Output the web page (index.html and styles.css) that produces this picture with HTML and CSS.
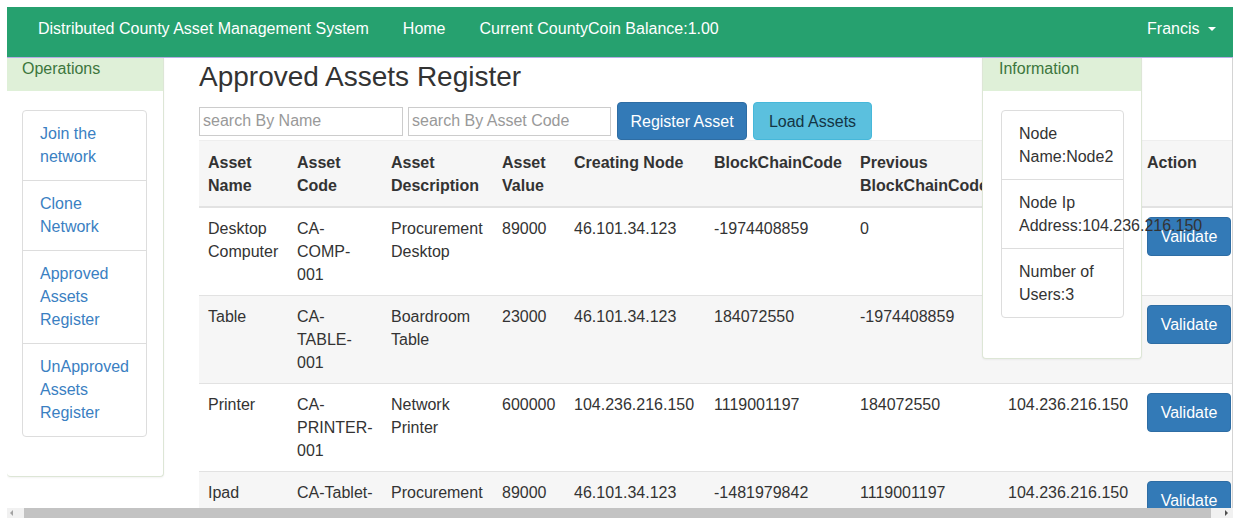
FILE: index.html
```html
<!DOCTYPE html>
<html lang="en">
<head>
<meta charset="utf-8">
<title>Approved Assets Register</title>
<link rel="stylesheet" href="styles.css">
</head>
<body>
<div class="frame">
  <nav class="navbar">
    <span class="brand">Distributed County Asset Management System</span>
    <a class="nav-link" href="#">Home</a>
    <span class="nav-link">Current CountyCoin Balance:1.00</span>
    <a class="nav-link nav-user" href="#">Francis <span class="caret"></span></a>
  </nav>

  <div class="page">
    <aside class="panel panel-side">
      <div class="panel-heading">Operations</div>
      <div class="panel-body">
        <div class="list-group">
          <a class="list-item link" href="#">Join the network</a>
          <a class="list-item link" href="#">Clone Network</a>
          <a class="list-item link" href="#">Approved Assets Register</a>
          <a class="list-item link" href="#">UnApproved Assets Register</a>
        </div>
      </div>
    </aside>

    <main class="main">
      <h2 class="page-title">Approved Assets Register</h2>
      <div class="toolbar">
        <input class="search search-name" type="text" placeholder="search By Name">
        <input class="search search-code" type="text" placeholder="search By Asset Code">
        <button class="btn btn-primary btn-register">Register Asset</button>
        <button class="btn btn-info">Load Assets</button>
      </div>

      <table class="assets">
        <colgroup>
          <col class="c-name"><col class="c-code"><col class="c-desc"><col class="c-value">
          <col class="c-node"><col class="c-chain"><col class="c-prev"><col class="c-approver"><col class="c-action">
        </colgroup>
        <thead>
          <tr>
            <th>Asset Name</th>
            <th>Asset Code</th>
            <th>Asset Description</th>
            <th>Asset Value</th>
            <th>Creating Node</th>
            <th>BlockChainCode</th>
            <th>Previous BlockChainCode</th>
            <th>Approving Node</th>
            <th>Action</th>
          </tr>
        </thead>
        <tbody>
          <tr>
            <td>Desktop Computer</td>
            <td>CA-COMP-001</td>
            <td>Procurement Desktop</td>
            <td>89000</td>
            <td>46.101.34.123</td>
            <td>-1974408859</td>
            <td>0</td>
            <td>104.236.216.150</td>
            <td><button class="btn btn-primary btn-validate">Validate</button></td>
          </tr>
          <tr>
            <td>Table</td>
            <td>CA-TABLE-001</td>
            <td>Boardroom Table</td>
            <td>23000</td>
            <td>46.101.34.123</td>
            <td>184072550</td>
            <td>-1974408859</td>
            <td>104.236.216.150</td>
            <td><button class="btn btn-primary btn-validate">Validate</button></td>
          </tr>
          <tr>
            <td>Printer</td>
            <td>CA-PRINTER-001</td>
            <td>Network Printer</td>
            <td>600000</td>
            <td>104.236.216.150</td>
            <td>1119001197</td>
            <td>184072550</td>
            <td>104.236.216.150</td>
            <td><button class="btn btn-primary btn-validate">Validate</button></td>
          </tr>
          <tr>
            <td>Ipad</td>
            <td>CA-Tablet-001</td>
            <td>Procurement Tablet</td>
            <td>89000</td>
            <td>46.101.34.123</td>
            <td>-1481979842</td>
            <td>1119001197</td>
            <td>104.236.216.150</td>
            <td><button class="btn btn-primary btn-validate">Validate</button></td>
          </tr>
        </tbody>
      </table>
    </main>

    <!-- node details card floats over the right side of the register table -->
    <section class="panel panel-info">
      <div class="panel-heading">Information</div>
      <div class="panel-body">
        <div class="list-group">
          <div class="list-item">Node Name:Node2</div>
          <div class="list-item">Node Ip Address:104.236.216.150</div>
          <div class="list-item">Number of Users:3</div>
        </div>
      </div>
    </section>
  </div>

  <div class="hscroll">
    <span class="arrow arrow-left"></span>
    <span class="thumb"></span>
    <span class="arrow arrow-right"></span>
  </div>
</div>
</body>
</html>
```

FILE: styles.css
```css
* {
  box-sizing: border-box;
}

html, body {
  margin: 0;
  padding: 0;
  background: #fff;
}

body {
  font-family: "Liberation Sans", Arial, Helvetica, sans-serif;
  font-size: 16px;
  line-height: 23px;
  color: #333;
}

.frame {
  height: 518px;
  width: 1236px;
  padding: 7px 3px 0 7px;
  display: flex;
  flex-direction: column;
  overflow: hidden;
}

/* top bar */
.navbar {
  flex: 0 0 50px;
  display: flex;
  align-items: center;
  padding-left: 14px;
  padding-bottom: 8px;
  background: #26a16f;
  box-shadow: 0 1px 0 #b7ace6;
  position: relative;
  z-index: 3;
  color: #fff;
}

.brand,
.nav-link {
  padding: 0 17px;
  color: #fff;
  text-decoration: none;
  white-space: nowrap;
}

.nav-user {
  margin-left: auto;
}

.caret {
  display: inline-block;
  width: 0;
  height: 0;
  margin-left: 4px;
  vertical-align: middle;
  border-top: 4px solid #fff;
  border-left: 4px solid transparent;
  border-right: 4px solid transparent;
}

/* content area */
.page {
  flex: 1 1 auto;
  position: relative;
  display: flex;
  align-items: flex-start;
  overflow: hidden;
  border-right: 1px solid #d4d4d4;
  min-height: 0;
}

.panel {
  background: #fff;
  border: 1px solid #dde6d6;
  border-top: 0;
  border-radius: 0 0 4px 4px;
  box-shadow: 0 1px 2px rgba(0, 0, 0, 0.05);
}

.panel-heading {
  height: 34px;
  padding: 0 16px;
  line-height: 23px;
  background: #dff0d8;
  color: #3c763d;
}

.panel-body {
  padding: 19px 17px 40px;
}

.panel-side {
  flex: 0 0 157px;
  width: 157px;
  border-left: 0;
}

.panel-side .panel-heading {
  padding-left: 15px;
}

.panel-side .panel-body {
  padding-left: 15px;
  padding-right: 16px;
  padding-bottom: 39px;
}

.list-group {
  border: 1px solid #ddd;
  border-radius: 4px;
}

.list-item {
  display: block;
  padding: 11px 16px 11px 17px;
  border-top: 1px solid #ddd;
  white-space: normal;
}

.list-item:first-child {
  border-top: 0;
}

.panel-side .list-item {
  padding-bottom: 12px;
}

.link {
  color: #3a80c2;
  text-decoration: none;
}

.main {
  flex: 1 1 auto;
  min-width: 0;
  margin-left: 35px;
}

.page-title {
  margin: 0;
  padding-top: 3px;
  font-size: 28px;
  line-height: 34px;
  font-weight: normal;
  color: #333;
}

.toolbar {
  display: flex;
  align-items: center;
  height: 38px;
  margin-top: 8px;
}

.search {
  height: 29px;
  padding: 0 3px;
  border: 1px solid #ccc;
  border-radius: 0;
  font-family: inherit;
  font-size: 16px;
  color: #555;
  background: #fff;
}

.search::placeholder {
  color: #999;
}

.search-name {
  width: 204px;
}

.search-code {
  width: 203px;
  margin-left: 5px;
}

.btn {
  display: inline-block;
  font-family: inherit;
  font-size: 16px;
  line-height: 23px;
  padding: 7px 12px 6px;
  border: 1px solid transparent;
  border-radius: 4px;
  white-space: nowrap;
  cursor: pointer;
}

.btn-primary {
  background: #337ab7;
  border-color: #2e6da4;
  color: #fff;
}

.btn-info {
  background: #5bc0de;
  border-color: #46b8da;
  color: #143544;
}

.btn-register {
  width: 130px;
  margin-left: 6px;
}

.btn-info {
  width: 119px;
  margin-left: 6px;
}

.btn-validate {
  width: 84px;
  padding: 7px 0;
}

/* register table */
.assets {
  width: 1049px;
  table-layout: fixed;
  border-collapse: collapse;
  border-top: 1px solid #eee;
}

.c-name { width: 89px; }
.c-code { width: 94px; }
.c-desc { width: 111px; }
.c-value { width: 72px; }
.c-node { width: 140px; }
.c-chain { width: 146px; }
.c-prev { width: 148px; }
.c-approver { width: 139px; }
.c-action { width: 110px; }

.assets th,
.assets td {
  padding: 10px 6px 9px 9px;
  text-align: left;
  vertical-align: top;
}

.assets th {
  font-weight: bold;
  border-bottom: 2px solid #e2e2e2;
}

.assets td {
  padding-top: 9px;
  border-top: 1px solid #e2e2e2;
}

.assets thead tr,
.assets tbody tr:nth-child(even) {
  background: #f6f6f6;
}

/* node information card */
.panel-info {
  position: absolute;
  top: 0;
  left: 975px;
  width: 160px;
  z-index: 2;
  border-left: 1px solid #dde6d6;
}

.panel-info .panel-body {
  padding-left: 18px;
  padding-right: 17px;
}

/* horizontal scrollbar at the bottom of the window */
.hscroll {
  flex: 0 0 10px;
  display: flex;
  align-items: center;
  background: #f1f1f1;
}

.thumb {
  flex: 1 1 auto;
  height: 10px;
  background: #c3c3c3;
}

.arrow {
  flex: 0 0 auto;
  width: 0;
  height: 0;
  border-top: 3px solid transparent;
  border-bottom: 3px solid transparent;
}

.arrow-left {
  margin: 0 11px 0 3px;
  border-right: 3px solid #a3a3a3;
}

.arrow-right {
  margin: 0 5px 0 14px;
  border-left: 3px solid #505050;
}
```
